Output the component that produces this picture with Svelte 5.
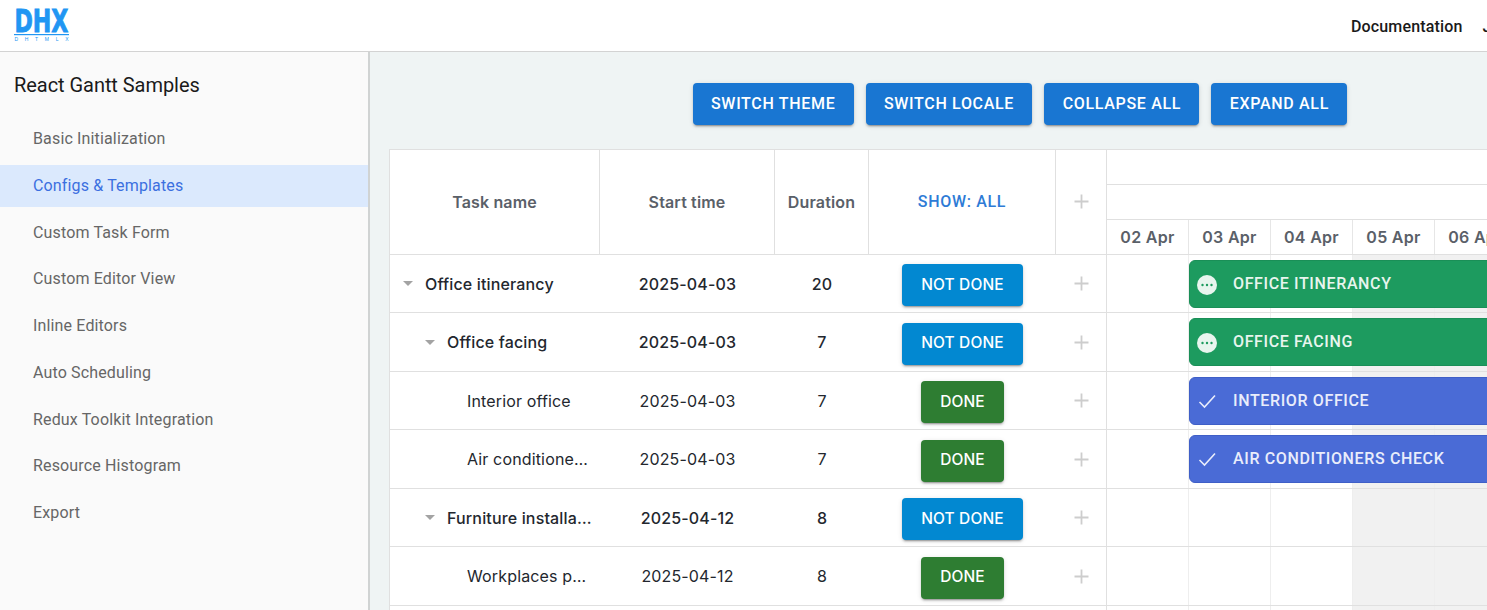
<script>
    const samples = [
        'Basic Initialization',
        'Configs & Templates',
        'Custom Task Form',
        'Custom Editor View',
        'Inline Editors',
        'Auto Scheduling',
        'Redux Toolkit Integration',
        'Resource Histogram',
        'Export'
    ];
    const actions = ['Switch theme', 'Switch locale', 'Collapse all', 'Expand all'];
    const days = ['02 Apr', '03 Apr', '04 Apr', '05 Apr', '06 Apr', '07 Apr', '08 Apr'];

    const tasks = [
        { name: 'Office itinerancy', start: '2025-04-03', duration: 20, level: 0, parent: true, done: false, bar: true },
        { name: 'Office facing', start: '2025-04-03', duration: 7, level: 1, parent: true, done: false, bar: true },
        { name: 'Interior office', start: '2025-04-03', duration: 7, level: 2, done: true, bar: true },
        { name: 'Air conditioners check', start: '2025-04-03', duration: 7, level: 2, done: true, bar: true },
        { name: 'Furniture installation', start: '2025-04-12', duration: 8, level: 1, parent: true, done: false },
        { name: 'Workplaces preparing', start: '2025-04-12', duration: 8, level: 2, done: true },
        { name: 'Workplaces importation', start: '2025-04-12', duration: 8, level: 2, done: false }
    ];

    // weekend columns in the timeline
    const isWeekend = (i) => i === 3 || i === 4;
</script>

{#snippet plus()}
    <svg class="plus" width="15" height="15" viewBox="0 0 15 15" aria-hidden="true">
        <path d="M7.5 0.5v14M0.5 7.5h14" stroke="#cdcdcd" stroke-width="1.8" fill="none" />
    </svg>
{/snippet}

<div class="page">
    <header class="topbar">
        <svg class="logo" width="56" height="34" viewBox="0 0 56 34" overflow="visible" role="img" aria-label="DHX DHTMLX">
            <text x="0.4" y="23.6" class="logo-main" textLength="54" lengthAdjust="spacingAndGlyphs">DHX</text>
            <rect x="0" y="26" width="55" height="1.2" fill="#2196f3" />
            <text x="0.5" y="33" class="logo-sub" textLength="54">DHTMLX</text>
        </svg>
        <nav class="topnav">
            <span>Documentation</span>
            <span>JavaScript Gantt</span>
        </nav>
    </header>

    <div class="layout">
        <aside class="sidebar">
            <h2>React Gantt Samples</h2>
            <ul>
                {#each samples as sample, i}
                    <li class:active={i === 1}>{sample}</li>
                {/each}
            </ul>
        </aside>

        <main class="content">
            <div class="content-inner">
                <div class="toolbar">
                    {#each actions as action}
                        <button class="btn primary">{action}</button>
                    {/each}
                </div>

                <div class="gantt">
                    <div class="gantt-head">
                        <div class="cell head col-name">Task name</div>
                        <div class="cell head col-start">Start time</div>
                        <div class="cell head col-duration">Duration</div>
                        <div class="cell head col-status show">Show: all</div>
                        <div class="cell head col-add">{@render plus()}</div>
                        <div class="scale">
                            <div class="scale-row"></div>
                            <div class="scale-row"></div>
                            <div class="scale-row dates">
                                {#each days as day}
                                    <div class="date">{day}</div>
                                {/each}
                            </div>
                        </div>
                    </div>

                    {#each tasks as task}
                        <div class="row" class:parent={task.parent}>
                            <div class="cell col-name name level-{task.level}">
                                {#if task.parent}
                                    <svg class="arrow" width="10" height="5" viewBox="0 0 10 5" aria-hidden="true">
                                        <path d="M0 0h10L5 5z" fill="#a3a3a3" />
                                    </svg>
                                {/if}
                                <span class="label">{task.name}</span>
                            </div>
                            <div class="cell col-start">{task.start}</div>
                            <div class="cell col-duration">{task.duration}</div>
                            <div class="cell col-status">
                                <button class="btn small" class:done={task.done} class:todo={!task.done}>
                                    {task.done ? 'Done' : 'Not done'}
                                </button>
                            </div>
                            <div class="cell col-add">{@render plus()}</div>
                            <div class="timeline">
                                {#each days as day, i}
                                    <div class="day" class:weekend={isWeekend(i)}></div>
                                {/each}
                                {#if task.bar}
                                    <div class="bar" class:bar-done={task.done}>
                                        {#if task.done}
                                            <svg class="bar-icon" width="20" height="20" viewBox="0 0 20 20" aria-hidden="true">
                                                <path d="M2.5 10l5 5L18 3.5" stroke="#e9edfb" stroke-width="1.6" fill="none" />
                                            </svg>
                                        {:else}
                                            <svg class="bar-icon" width="20" height="20" viewBox="0 0 20 20" aria-hidden="true">
                                                <circle cx="10" cy="10" r="10" fill="#e8f5ee" />
                                                <circle cx="5.5" cy="10" r="1.2" fill="#1d9b5f" />
                                                <circle cx="10" cy="10" r="1.2" fill="#1d9b5f" />
                                                <circle cx="14.5" cy="10" r="1.2" fill="#1d9b5f" />
                                            </svg>
                                        {/if}
                                        <span>{task.name}</span>
                                    </div>
                                {/if}
                            </div>
                        </div>
                    {/each}
                </div>
            </div>
        </main>
    </div>
</div>

<style>
    :global(html),
    :global(body) {
        margin: 0;
        height: 100%;
        overflow: hidden;
    }

    .page {
        height: 100vh;
        display: flex;
        flex-direction: column;
        overflow: hidden;
        font-family: Roboto, "Liberation Sans", sans-serif;
    }

    .topbar {
        flex: none;
        height: 51px;
        border-bottom: 1px solid #d3d3d3;
        background: #fff;
        display: flex;
        align-items: flex-start;
        padding-left: 14px;
    }

    .logo {
        margin-top: 8px;
        flex: none;
    }

    .logo-main {
        font-family: "DejaVu Sans", sans-serif;
        font-weight: 700;
        font-size: 32px;
        fill: #2196f3;
        stroke: #2196f3;
        stroke-width: 0.9px;
    }

    .logo-sub {
        font-family: "Liberation Sans", sans-serif;
        font-size: 5px;
        fill: #2196f3;
    }

    .topnav {
        flex: none;
        margin-left: 1281px;
        height: 53px;
        display: flex;
        align-items: center;
        gap: 20px;
        font-size: 16px;
        font-weight: 500;
        letter-spacing: 0.15px;
        color: #1a1a1a;
        white-space: nowrap;
    }

    .layout {
        flex: 1;
        min-height: 0;
        display: flex;
    }

    .sidebar {
        flex: none;
        width: 368px;
        background: #fafafa;
        border-right: 2px solid #d0d3d3;
        padding-top: 21px;
    }

    .sidebar h2 {
        margin: 0 0 21px 14px;
        font-size: 20px;
        line-height: 24px;
        font-weight: 400;
        letter-spacing: -0.05px;
        color: #1a1a1a;
    }

    .sidebar ul {
        list-style: none;
        margin: 0;
        padding: 0;
        display: flex;
        flex-direction: column;
        gap: 4.75px;
    }

    .sidebar li {
        height: 42px;
        line-height: 42px;
        padding-left: 33px;
        font-size: 16px;
        letter-spacing: 0.15px;
        color: #666;
    }

    .sidebar li.active {
        background: #dbe9fd;
        color: #3b6fe0;
    }

    .content {
        flex: 1;
        min-width: 0;
        background: #eff4f4;
        overflow: hidden;
    }

    .content-inner {
        width: 1300px;
        box-sizing: border-box;
        padding: 31px 19px 0;
    }

    .toolbar {
        display: flex;
        justify-content: center;
        gap: 12px;
        margin-bottom: 24px;
    }

    .btn {
        border: none;
        border-radius: 4px;
        height: 42px;
        padding: 0 18.3px 2px;
        font-family: inherit;
        font-size: 16px;
        font-weight: 500;
        letter-spacing: 0.68px;
        text-transform: uppercase;
        color: #fff;
        box-shadow: 0 3px 1px -2px rgba(0, 0, 0, 0.2), 0 2px 2px rgba(0, 0, 0, 0.14), 0 1px 5px rgba(0, 0, 0, 0.12);
    }

    .btn.small {
        font-size: 15.5px;
        letter-spacing: 0.15px;
        padding: 0 18.7px 2px;
    }

    .primary {
        background: #1976d2;
    }

    .todo {
        background: #0288d1;
    }

    .done {
        background: #2e7d32;
    }

    .gantt {
        background: #fff;
        border: 1px solid #e0e0e0;
        font-family: Inter, "Liberation Sans", sans-serif;
        font-size: 16px;
        letter-spacing: 0.15px;
        color: #23272e;
    }

    .gantt-head,
    .row {
        display: flex;
        box-sizing: border-box;
    }

    .gantt-head {
        height: 104.95px;
        border-bottom: 1px solid #e0e0e0;
    }

    .row {
        height: 58.5px;
        border-bottom: 1px solid #e0e0e0;
    }

    .row.parent {
        font-weight: 500;
    }

    .cell {
        flex: none;
        box-sizing: border-box;
        display: flex;
        align-items: center;
        justify-content: center;
        white-space: nowrap;
    }

    .cell.head {
        font-weight: 600;
        color: #5a6068;
        border-right: 1px solid #e0e0e0;
    }

    .col-name { width: 210px; }
    .col-start { width: 175px; }
    .col-duration { width: 94px; }
    .col-status { width: 187px; }
    .col-add { width: 51px; border-right: 1px solid #e0e0e0; }

    .cell.show {
        font-family: Roboto, "Liberation Sans", sans-serif;
        font-weight: 500;
        letter-spacing: 0.68px;
        text-transform: uppercase;
        color: #2e7bd6;
    }

    .row .cell.col-status {
        padding-top: 3px;
    }

    .name {
        justify-content: flex-start;
        padding-right: 8px;
    }

    .level-0 { padding-left: 13px; }
    .level-1 { padding-left: 35px; }
    .level-2 { padding-left: 77px; }

    .arrow {
        flex: none;
        margin-right: 12px;
    }

    .label {
        overflow: hidden;
        text-overflow: ellipsis;
    }

    .plus {
        display: block;
    }

    .scale {
        flex: 1;
        min-width: 0;
        display: flex;
        flex-direction: column;
    }

    .scale-row {
        height: 35px;
        box-sizing: border-box;
        border-bottom: 1px solid #e0e0e0;
    }

    .scale-row.dates {
        border-bottom: none;
        height: 34px;
        display: flex;
    }

    .date {
        flex: none;
        width: 82px;
        box-sizing: border-box;
        border-right: 1px solid #e6e6e6;
        display: flex;
        align-items: center;
        justify-content: center;
        font-weight: 600;
        letter-spacing: 0.3px;
        color: #5a6068;
        white-space: nowrap;
    }

    .timeline {
        flex: 1;
        min-width: 0;
        position: relative;
        display: flex;
    }

    .day {
        flex: none;
        width: 82px;
        box-sizing: border-box;
        border-right: 1px solid #eeeeee;
    }

    .day.weekend {
        background: #f1f1f1;
    }

    .bar {
        position: absolute;
        left: 82px;
        right: -20px;
        top: 5px;
        height: 48px;
        box-sizing: border-box;
        border: 1px solid #1a8f57;
        border-radius: 6px;
        background: #1d9b5f;
        display: flex;
        align-items: center;
        font-family: Roboto, "Liberation Sans", sans-serif;
        font-weight: 500;
        letter-spacing: 0.63px;
        text-transform: uppercase;
        color: #e8f5ee;
        white-space: nowrap;
    }

    .bar-done {
        border-color: #3f5fc7;
        background: #4a6bd6;
        color: #e9edfb;
    }

    .bar-icon {
        flex: none;
        margin: 2px 0 0 7px;
    }

    .bar span {
        margin-left: 16px;
        margin-top: -1.2px;
    }
</style>
